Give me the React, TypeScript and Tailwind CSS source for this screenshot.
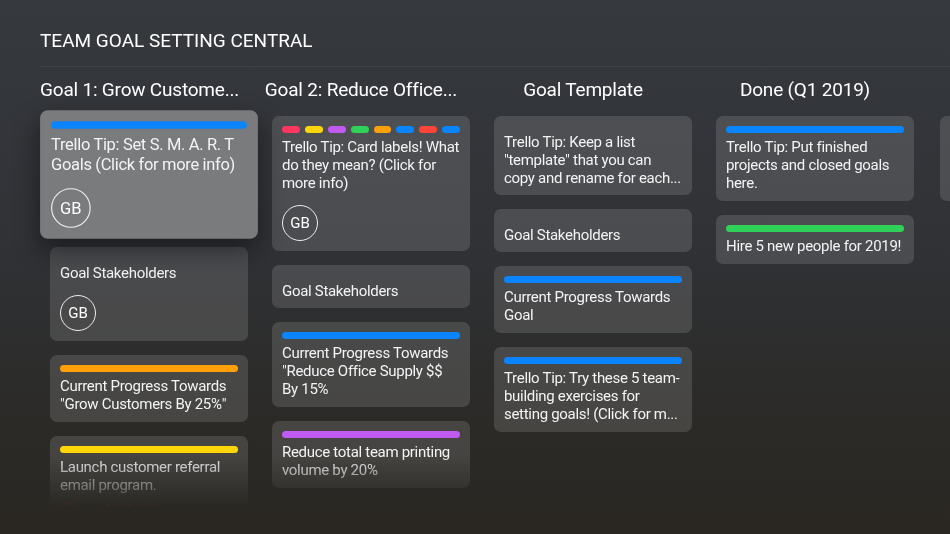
import React from 'react';
import { Clock } from 'lucide-react';
import { clsx } from 'clsx';

type Card = {
    labels?: string[];
    lines: string[];
    avatar?: boolean;
    focused?: boolean;
    due?: string;
};

type List = {
    title: string;
    cards: Card[];
};

const BLUE = 'bg-[#0a84ff]';
const ORANGE = 'bg-[#ff9f0a]';
const YELLOW = 'bg-[#ffd60a]';
const GREEN = 'bg-[#30d158]';
const PURPLE = 'bg-[#bf5af2]';
const PINK = 'bg-[#ff375f]';
const RED = 'bg-[#ff453a]';

const lists: List[] = [
    {
        title: 'Goal 1: Grow Custome...',
        cards: [
            { labels: [BLUE], lines: ['Trello Tip: Set S. M. A. R. T', 'Goals (Click for more info)'], avatar: true, focused: true },
            { lines: ['Goal Stakeholders'], avatar: true },
            { labels: [ORANGE], lines: ['Current Progress Towards', '"Grow Customers By 25%"'] },
            { labels: [YELLOW], lines: ['Launch customer referral', 'email program.'], due: '1/31/19' },
        ],
    },
    {
        title: 'Goal 2: Reduce Office...',
        cards: [
            { labels: [PINK, YELLOW, PURPLE, GREEN, ORANGE, BLUE, RED, BLUE], lines: ['Trello Tip: Card labels! What', 'do they mean? (Click for', 'more info)'], avatar: true },
            { lines: ['Goal Stakeholders'] },
            { labels: [BLUE], lines: ['Current Progress Towards', '"Reduce Office Supply $$', 'By 15%'] },
            { labels: [PURPLE], lines: ['Reduce total team printing', 'volume by 20%'] },
        ],
    },
    {
        title: 'Goal Template',
        cards: [
            { lines: ['Trello Tip: Keep a list', '"template" that you can', 'copy and rename for each...'] },
            { lines: ['Goal Stakeholders'] },
            { labels: [BLUE], lines: ['Current Progress Towards', 'Goal'] },
            { labels: [BLUE], lines: ['Trello Tip: Try these 5 team-', 'building exercises for', 'setting goals! (Click for m...'] },
        ],
    },
    {
        title: 'Done (Q1 2019)',
        cards: [
            { labels: [BLUE], lines: ['Trello Tip: Put finished', 'projects and closed goals', 'here.'] },
            { labels: [GREEN], lines: ['Hire 5 new people for 2019!'] },
        ],
    },
];

const Avatar = () => (
    <div className="mt-[13px] w-[36px] h-[36px] rounded-full border-[1.5px] border-white/90 flex items-center justify-center text-[15px] tracking-normal text-white">
        GB
    </div>
);

const CardView = ({ card }: { card: Card }) => {
    const hasLabels = !!card.labels?.length;
    return (
        <div
            className={clsx(
                'w-[198px] rounded-[7px] px-[10px] text-[15px] leading-[18px] tracking-[-0.3px] text-[#f4f4f5]',
                hasLabels ? 'pt-[10px] pb-[9px]' : 'pt-[17px] pb-[8px]',
                card.avatar && 'pb-[10px]',
                card.focused
                    ? 'bg-[#7a7b7d] scale-110 shadow-[0_10px_24px_rgba(0,0,0,0.45)] relative z-10'
                    : 'bg-white/[0.13]'
            )}
        >
            {hasLabels && (
                <div className="flex gap-[5px] mb-[5px]">
                    {card.labels!.map((c, i) => (
                        <div key={i} className={clsx('h-[7px] flex-1 rounded-full', c)} />
                    ))}
                </div>
            )}
            {card.lines.map((l, i) => (
                <div key={i} className="whitespace-nowrap">{l}</div>
            ))}
            {card.avatar && <Avatar />}
            {card.due && (
                <div className="flex items-center mt-[6px] mb-[30px] text-[#ff453a]">
                    <Clock className="w-[14px] h-[14px]" strokeWidth={2} />
                    <span className="ml-[30px]">{card.due}</span>
                </div>
            )}
        </div>
    );
};

const ListColumn = ({ list }: { list: List }) => (
    <div className="w-[222px] shrink-0 flex flex-col">
        <div className="w-[198px] text-center whitespace-nowrap text-[19px] leading-[24px] tracking-[-0.2px] text-white h-[24px]">
            {list.title}
        </div>
        <div className="flex flex-col gap-[14px] mt-[14px] ml-[10px]">
            {list.cards.map((c, i) => (
                <CardView key={i} card={c} />
            ))}
        </div>
    </div>
);

export default function App() {
    return (
        <div
            className="w-[950px] h-[534px] overflow-hidden bg-[linear-gradient(to_bottom,#36393e_0%,#303236_45%,#2b2a27_80%,#2a2722_100%)]"
            style={{ fontFamily: 'Roboto, "Liberation Sans", sans-serif' }}
        >
            <div className="h-full [mask-image:linear-gradient(to_bottom,black_455px,transparent_508px)]">
                <div className="pl-[40px] pt-[29px] text-[19px] leading-[24px] text-white">
                    TEAM GOAL SETTING CENTRAL
                </div>
                <div className="ml-[40px] mt-[13px] h-px bg-white/[0.06]" />
                <div className="flex pl-[40px] pt-[11px]">
                    {lists.map((l, i) => (
                        <ListColumn key={i} list={l} />
                    ))}
                    <div className="w-[222px] shrink-0 flex flex-col">
                        <div className="h-[24px]" />
                        <div className="mt-[14px] ml-[12px] w-[198px] h-[85px] rounded-[7px] bg-white/[0.13]" />
                    </div>
                </div>
            </div>
        </div>
    );
}
